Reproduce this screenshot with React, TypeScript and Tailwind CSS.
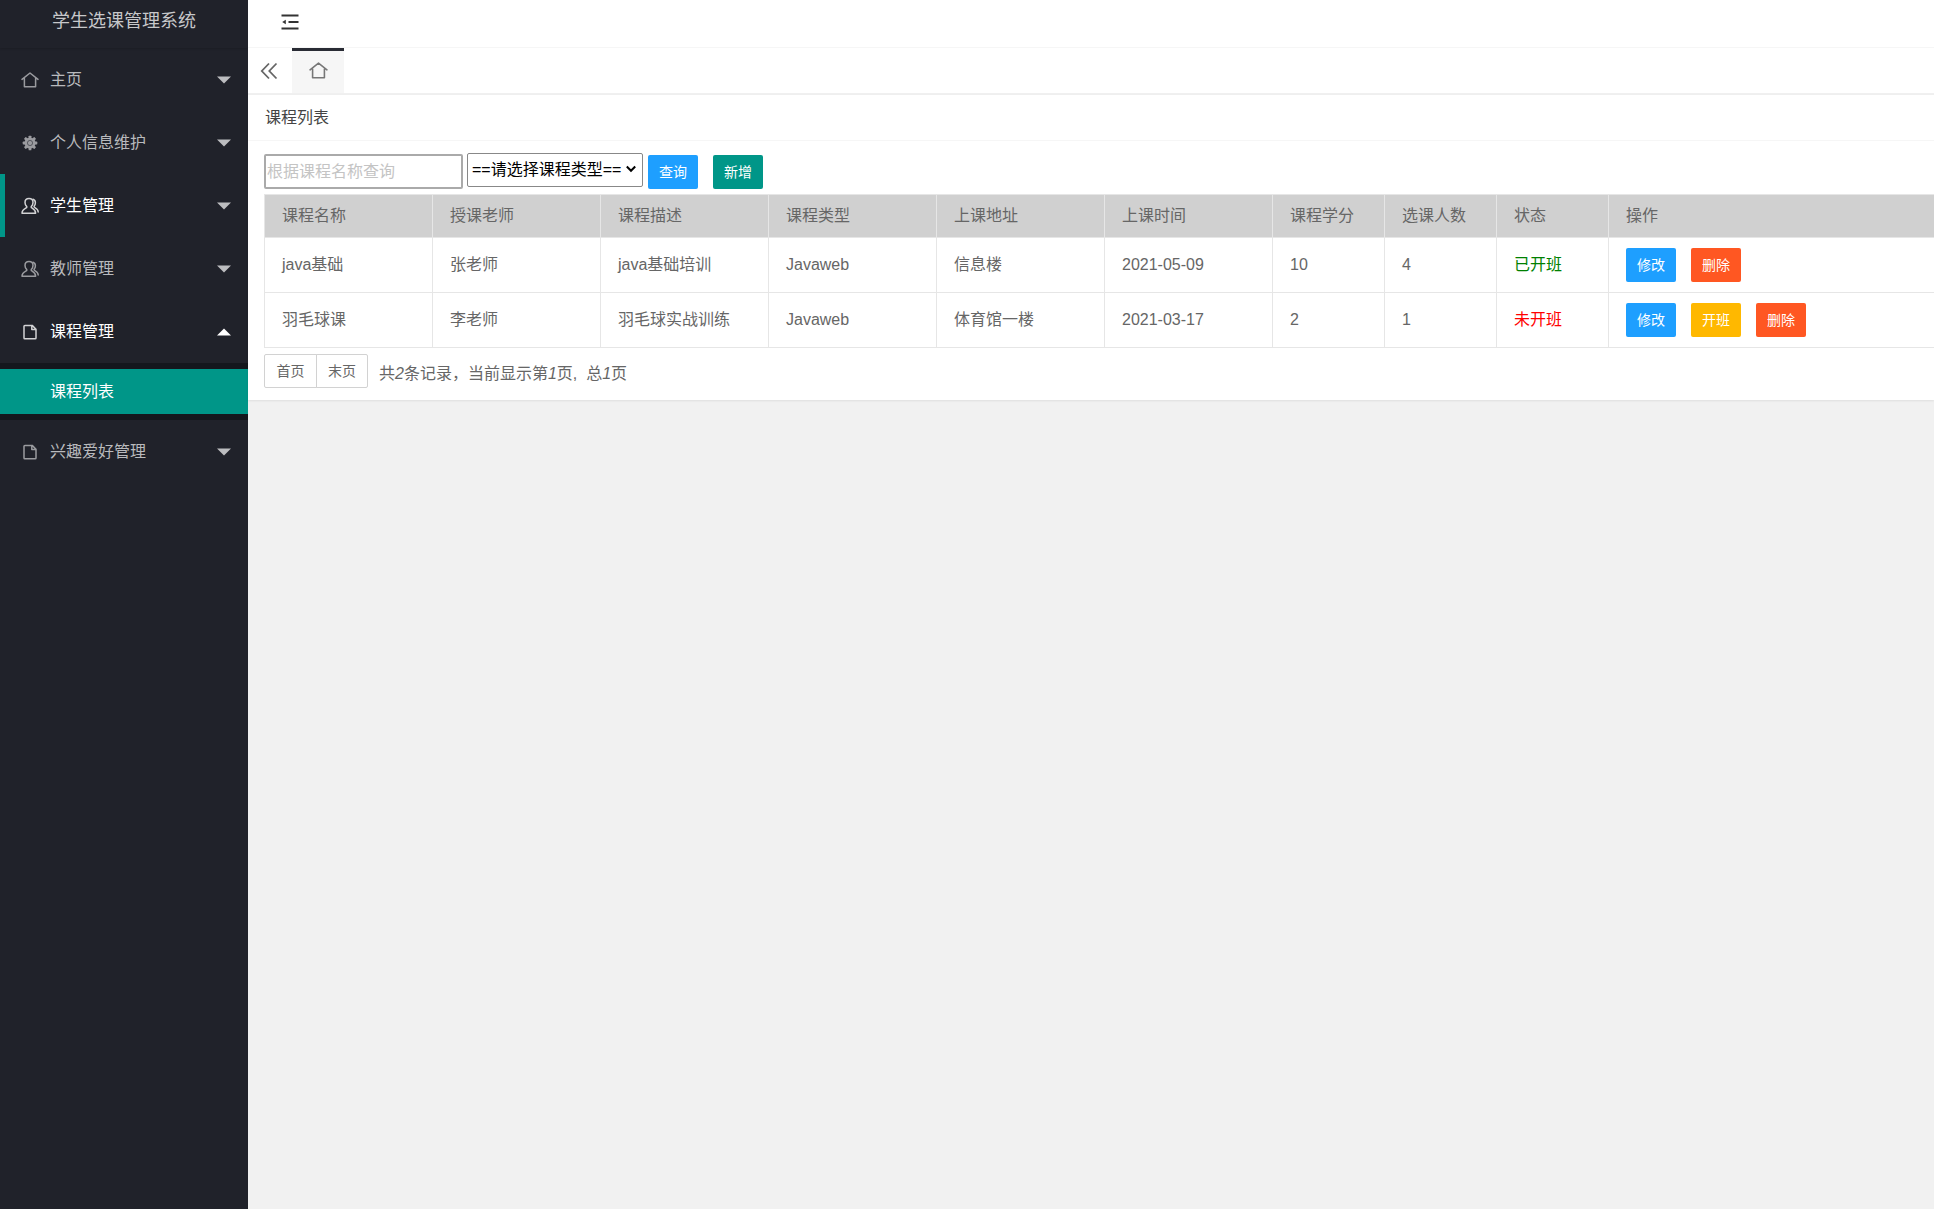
import React from "react";

type IconProps = { className?: string };

const HomeIcon = ({ className }: IconProps) => (
  <svg viewBox="0 0 18 18" className={className} fill="none" stroke="currentColor" strokeWidth="1.5" aria-hidden="true">
    <path d="M1 8.4 9 2 17 8.4M3.4 7.4V15.8H14.6V7.4" strokeLinejoin="round" strokeLinecap="round" />
  </svg>
);

const GearIcon = ({ className }: IconProps) => (
  <svg viewBox="0 0 18 18" className={className} aria-hidden="true">
    <g fill="currentColor">
      <circle cx="9" cy="9" r="5.5" />
      {[0, 45, 90, 135].map((a) => (
        <rect key={a} x="7.6" y="1.7" width="2.8" height="14.6" rx="0.6" transform={`rotate(${a} 9 9)`} />
      ))}
    </g>
    <circle cx="9" cy="9" r="2.6" fill="none" stroke="#20222a" strokeWidth="0.9" strokeOpacity="0.6" />
  </svg>
);

const UsersIcon = ({ className }: IconProps) => (
  <svg viewBox="0 0 18 18" className={className} fill="none" stroke="currentColor" strokeWidth="1.5" strokeLinejoin="round" strokeLinecap="round" aria-hidden="true">
    <path d="M8 1.6C5.5 1.6 4 3.3 4 5.5 4 7.2 4.8 8.7 5.8 9.6 6 10.3 5.6 10.8 4.8 11.2 2.6 12.3 1 13.2 1 16.3H14.6C14.6 13.2 13.2 12.3 11.2 11.2 10.4 10.8 10 10.3 10.2 9.6 11.2 8.7 12 7.2 12 5.5 12 3.3 10.5 1.6 8 1.6Z" />
    <path d="M12 2.2C13.6 2.8 14.4 4.2 14.4 5.8 14.4 7.3 13.8 8.5 13 9.3 13 10.1 13.5 10.5 14.2 10.9 16 11.9 17.2 12.7 17.2 15" />
  </svg>
);

const FileIcon = ({ className }: IconProps) => (
  <svg viewBox="0 0 18 18" className={className} fill="none" stroke="currentColor" strokeWidth="1.5" strokeLinejoin="round" aria-hidden="true">
    <path d="M3.6 2.4H11.2L15 6.2V15Q15 15.8 14.2 15.8H3.8Q3 15.8 3 15V3.2Q3 2.4 3.8 2.4M10.8 2.4V6.4H15" />
  </svg>
);

type Item = {
  label: string;
  Icon: (p: IconProps) => React.ReactElement;
  active?: boolean;
  marked?: boolean;
  children?: string[];
};

const menu: Item[] = [
  { label: "主页", Icon: HomeIcon },
  { label: "个人信息维护", Icon: GearIcon },
  { label: "学生管理", Icon: UsersIcon, active: true, marked: true },
  { label: "教师管理", Icon: UsersIcon },
  { label: "课程管理", Icon: FileIcon, active: true, children: ["课程列表"] },
  { label: "兴趣爱好管理", Icon: FileIcon },
];

const MenuItem = ({ label, Icon, active, marked, children }: Item) => (
  <li>
    <button
      type="button"
      aria-expanded={!!children}
      className={`flex h-[63px] w-full items-center border-l-[5px] pt-px pr-[17px] pl-4 text-left ${
        marked ? "border-[#009688]" : "border-transparent"
      } ${active ? "text-white" : "text-[#b9babd]"}`}
    >
      <Icon className="size-[18px] shrink-0 opacity-80" />
      <span className="ml-[11px] flex-1">{label}</span>
      <svg viewBox="0 0 14 8" className={`h-2 w-3.5 ${children ? "text-white" : "text-[#bcbdc0]"}`} fill="currentColor" aria-hidden="true">
        {children ? <path d="M0 7.5 7 0.5 14 7.5Z" /> : <path d="M0 0.5H14L7 7.5Z" />}
      </svg>
    </button>
    {children && (
      <ul className="bg-[#14171d] py-1.5">
        {children.map((c) => (
          <li key={c}>
            <a href="#" className="flex h-[45px] items-center bg-[#009688] pt-px pl-[50px] text-white">
              {c}
            </a>
          </li>
        ))}
      </ul>
    )}
  </li>
);

const columns = ["课程名称", "授课老师", "课程描述", "课程类型", "上课地址", "上课时间", "课程学分", "选课人数", "状态", "操作"];

const rows = [
  { cells: ["java基础", "张老师", "java基础培训", "Javaweb", "信息楼", "2021-05-09", "10", "4"], open: true },
  { cells: ["羽毛球课", "李老师", "羽毛球实战训练", "Javaweb", "体育馆一楼", "2021-03-17", "2", "1"], open: false },
];

const tones = {
  blue: "bg-[#1e9fff]",
  green: "bg-[#009688]",
  yellow: "bg-[#ffb800]",
  red: "bg-[#ff5722]",
};

const Btn = ({ tone, children }: { tone: keyof typeof tones; children: string }) => (
  <button type="button" className={`h-[34px] w-[50px] rounded-xs text-sm text-white ${tones[tone]}`}>
    {children}
  </button>
);

export default function App() {
  return (
    <div className="flex min-h-screen bg-[#f1f1f1] font-['Liberation_Sans','Noto_Sans_CJK_SC',sans-serif] text-base leading-6 text-[#666]">
      <aside className="w-[248px] shrink-0 bg-[#20222a]">
        <h1 className="flex h-12 items-center justify-center pb-1.5 text-lg text-[#c7c8ca] shadow-[0_1px_2px_rgba(0,0,0,0.15)]">学生选课管理系统</h1>
        <nav aria-label="主菜单">
          <ul>
            {menu.map((m) => (
              <MenuItem key={m.label} {...m} />
            ))}
          </ul>
        </nav>
      </aside>

      <div className="min-w-0 flex-1">
        <header className="flex h-12 items-center border-b border-[#f6f6f6] bg-white pb-1 pl-[33px]">
          <button type="button" aria-label="收起菜单" className="text-[#333]">
            <svg viewBox="0 0 18 18" className="size-[18px]" fill="none" stroke="currentColor" strokeWidth="1.8" aria-hidden="true">
              <path d="M0.5 2.5H17.5M7.5 9H17.5M0.5 15.5H17.5" />
              <path d="M4.8 6.8V11.2L1.2 9Z" fill="currentColor" stroke="none" />
            </svg>
          </button>
        </header>

        <div className="flex h-[47px] items-stretch border-b-2 border-[#f0f0f0] bg-white">
          <button type="button" aria-label="向左滚动" className="flex w-11 items-center justify-center pr-0.5 text-[#666]">
            <svg viewBox="0 0 18 18" className="size-[18px]" fill="none" stroke="currentColor" strokeWidth="1.8" aria-hidden="true">
              <path d="M9 1.5 1.8 9 9 16.5M16.5 1.5 9.3 9 16.5 16.5" />
            </svg>
          </button>
          <button type="button" aria-label="主页标签" className="flex w-[52px] items-center justify-center border-t-[3px] border-[#292b34] bg-[#f6f6f6] pb-1 text-[#777]">
            <HomeIcon className="size-[19px]" />
          </button>
        </div>

        <main className="overflow-hidden bg-white shadow-[0_1px_2px_rgba(0,0,0,0.08)]">
          <h2 className="flex h-[46px] items-center border-b border-[#f6f6f6] px-[17px] text-[#444]">课程列表</h2>
          <div className="pt-3 pb-3 pl-4">
            <form className="flex h-[41px] items-start" onSubmit={(e) => e.preventDefault()}>
              <input
                type="text"
                aria-label="课程名称"
                placeholder="根据课程名称查询"
                className="mt-px h-[35px] w-[199px] rounded-xs border-2 border-[#aaa] px-px placeholder:text-[#c4c4c4]"
              />
              <div className="relative ml-1">
                <select aria-label="课程类型" className="h-[34px] w-44 appearance-none rounded-xs border border-[#888] bg-white pl-1 text-black">
                  <option>==请选择课程类型==</option>
                </select>
                <svg viewBox="0 0 10 8" className="pointer-events-none absolute top-3 right-[7px] h-2 w-2.5" fill="none" stroke="#000" strokeWidth="2" aria-hidden="true">
                  <path d="M0.8 1.5 5 5.8 9.2 1.5" />
                </svg>
              </div>
              <div className="mt-0.5 ml-[5px] flex gap-[15px]">
                <Btn tone="blue">查询</Btn>
                <Btn tone="green">新增</Btn>
              </div>
            </form>

            <table className="w-full table-fixed border-collapse text-left">
              <colgroup>
                {columns.map((c, i) => (
                  <col key={c} className={i < 6 ? "w-[168px]" : i < 9 ? "w-[112px]" : ""} />
                ))}
              </colgroup>
              <thead>
                <tr className="h-[43px] bg-[#d0d0d0]">
                  {columns.map((c) => (
                    <th key={c} scope="col" className="border border-r-0 border-[#e6e6e6] px-[17px] font-normal">
                      {c}
                    </th>
                  ))}
                </tr>
              </thead>
              <tbody>
                {rows.map((r) => (
                  <tr key={r.cells[0]} className="h-[55px]">
                    {r.cells.map((c, i) => (
                      <td key={i} className="border border-[#e6e6e6] px-[17px]">
                        {c}
                      </td>
                    ))}
                    <td className={`border border-[#e6e6e6] px-[17px] ${r.open ? "text-[#008000]" : "text-[#ff0000]"}`}>{r.open ? "已开班" : "未开班"}</td>
                    <td className="border border-r-0 border-[#e6e6e6] px-[17px]">
                      <div className="flex gap-[15px]">
                        <Btn tone="blue">修改</Btn>
                        {!r.open && <Btn tone="yellow">开班</Btn>}
                        <Btn tone="red">删除</Btn>
                      </div>
                    </td>
                  </tr>
                ))}
              </tbody>
            </table>

            <div className="mt-1.5 flex">
              <button type="button" className="h-[34px] w-[53px] rounded-l-xs border border-[#d2d2d2] text-sm">首页</button>
              <button type="button" className="-ml-px h-[34px] w-[52px] rounded-r-xs border border-[#d2d2d2] text-sm">末页</button>
              <p className="ml-[11px] pt-2">
                共<i>2</i>条记录，当前显示第<i>1</i>页,&nbsp;&nbsp;总<i>1</i>页
              </p>
            </div>
          </div>
        </main>
      </div>
    </div>
  );
}
